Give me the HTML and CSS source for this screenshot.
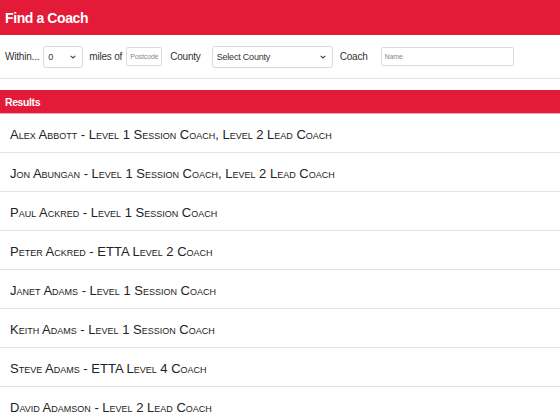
FILE: index.html
```html
<!DOCTYPE html>
<html>
<head>
<meta charset="utf-8">
<link rel="stylesheet" href="styles.css">
</head>
<body>
<header class="topbar"><h1>Find a Coach</h1></header>
<form class="filters">
  <label class="lbl">Within...</label>
  <select class="sel sel-miles"><option>0</option></select>
  <label class="lbl">miles of</label>
  <input class="inp inp-post" placeholder="Postcode">
  <label class="lbl">County</label>
  <select class="sel sel-county"><option>Select County</option></select>
  <label class="lbl">Coach</label>
  <input class="inp inp-name" placeholder="Name">
</form>
<div class="results-bar">Results</div>
<ul class="results">
  <li>Alex Abbott - Level 1 Session Coach, Level 2 Lead Coach</li>
  <li>Jon Abungan - Level 1 Session Coach, Level 2 Lead Coach</li>
  <li>Paul Ackred - Level 1 Session Coach</li>
  <li>Peter Ackred - ETTA Level 2 Coach</li>
  <li>Janet Adams - Level 1 Session Coach</li>
  <li>Keith Adams - Level 1 Session Coach</li>
  <li>Steve Adams - ETTA Level 4 Coach</li>
  <li>David Adamson - Level 2 Lead Coach</li>
</ul>
</body>
</html>
```

FILE: styles.css
```css
* { box-sizing: border-box; }
html, body { margin: 0; padding: 0; background: #fff; }
body { font-family: "Liberation Sans", Arial, sans-serif; color: #333; overflow: hidden; }

.topbar {
  background: #e31a38;
  height: 35px;
  display: flex;
  align-items: center;
  padding: 0 5px;
}
.topbar h1 {
  margin: 0;
  color: #fff;
  font-size: 14px;
  letter-spacing: -0.4px;
  font-weight: bold;
}

.filters {
  height: 44px;
  display: flex;
  align-items: center;
  padding: 0 5px;
  border-bottom: 1px solid #e2e2e2;
  margin: 0 0 11px 0;
}
.lbl {
  font-size: 10px;
  letter-spacing: -0.2px;
  color: #333;
}
.sel {
  -webkit-appearance: none;
  appearance: none;
  height: 22px;
  border: 1px solid #d9d9d9;
  border-radius: 3px;
  background-color: #fff;
  background-image: url("data:image/svg+xml;utf8,<svg xmlns='http://www.w3.org/2000/svg' width='6' height='4' viewBox='0 0 6 4'><path d='M0.7 0.8 L3 3 L5.3 0.8' fill='none' stroke='%23444' stroke-width='1.1'/></svg>");
  background-repeat: no-repeat;
  background-position: right 6px center;
  background-size: 6px 4px;
  font-family: "Liberation Sans", Arial, sans-serif;
  font-size: 9px;
  letter-spacing: -0.2px;
  color: #333;
  padding: 0 4px;
}
.sel-miles { width: 40px; margin: 0 6px 0 4px; }
.sel-county { width: 121px; margin: 0 7px 0 11px; }
.inp {
  height: 19px;
  border: 1px solid #dcdcdc;
  border-radius: 2px;
  font-family: "Liberation Sans", Arial, sans-serif;
  font-size: 7px;
  letter-spacing: -0.1px;
  padding: 0 3px;
  color: #333;
}
.inp::placeholder { color: #888; }
.inp-post { width: 36px; margin: 0 8px 0 4px; }
.inp-name { width: 133px; margin-left: 13px; }

.results-bar {
  background: #e31a38;
  color: #fff;
  font-weight: bold;
  font-size: 10.5px;
  letter-spacing: -0.4px;
  height: 24px;
  display: flex;
  align-items: center;
  padding: 0 5px;
  border-bottom: 1px solid #f3a9b5;
}

.results { list-style: none; margin: 0; padding: 0; }
.results li {
  height: 39px;
  display: flex;
  align-items: center;
  padding: 2px 10px 0 10px;
  border-bottom: 1px solid #e2e2e2;
  font-variant: small-caps;
  font-size: 13px;
  color: #222;
}
```
